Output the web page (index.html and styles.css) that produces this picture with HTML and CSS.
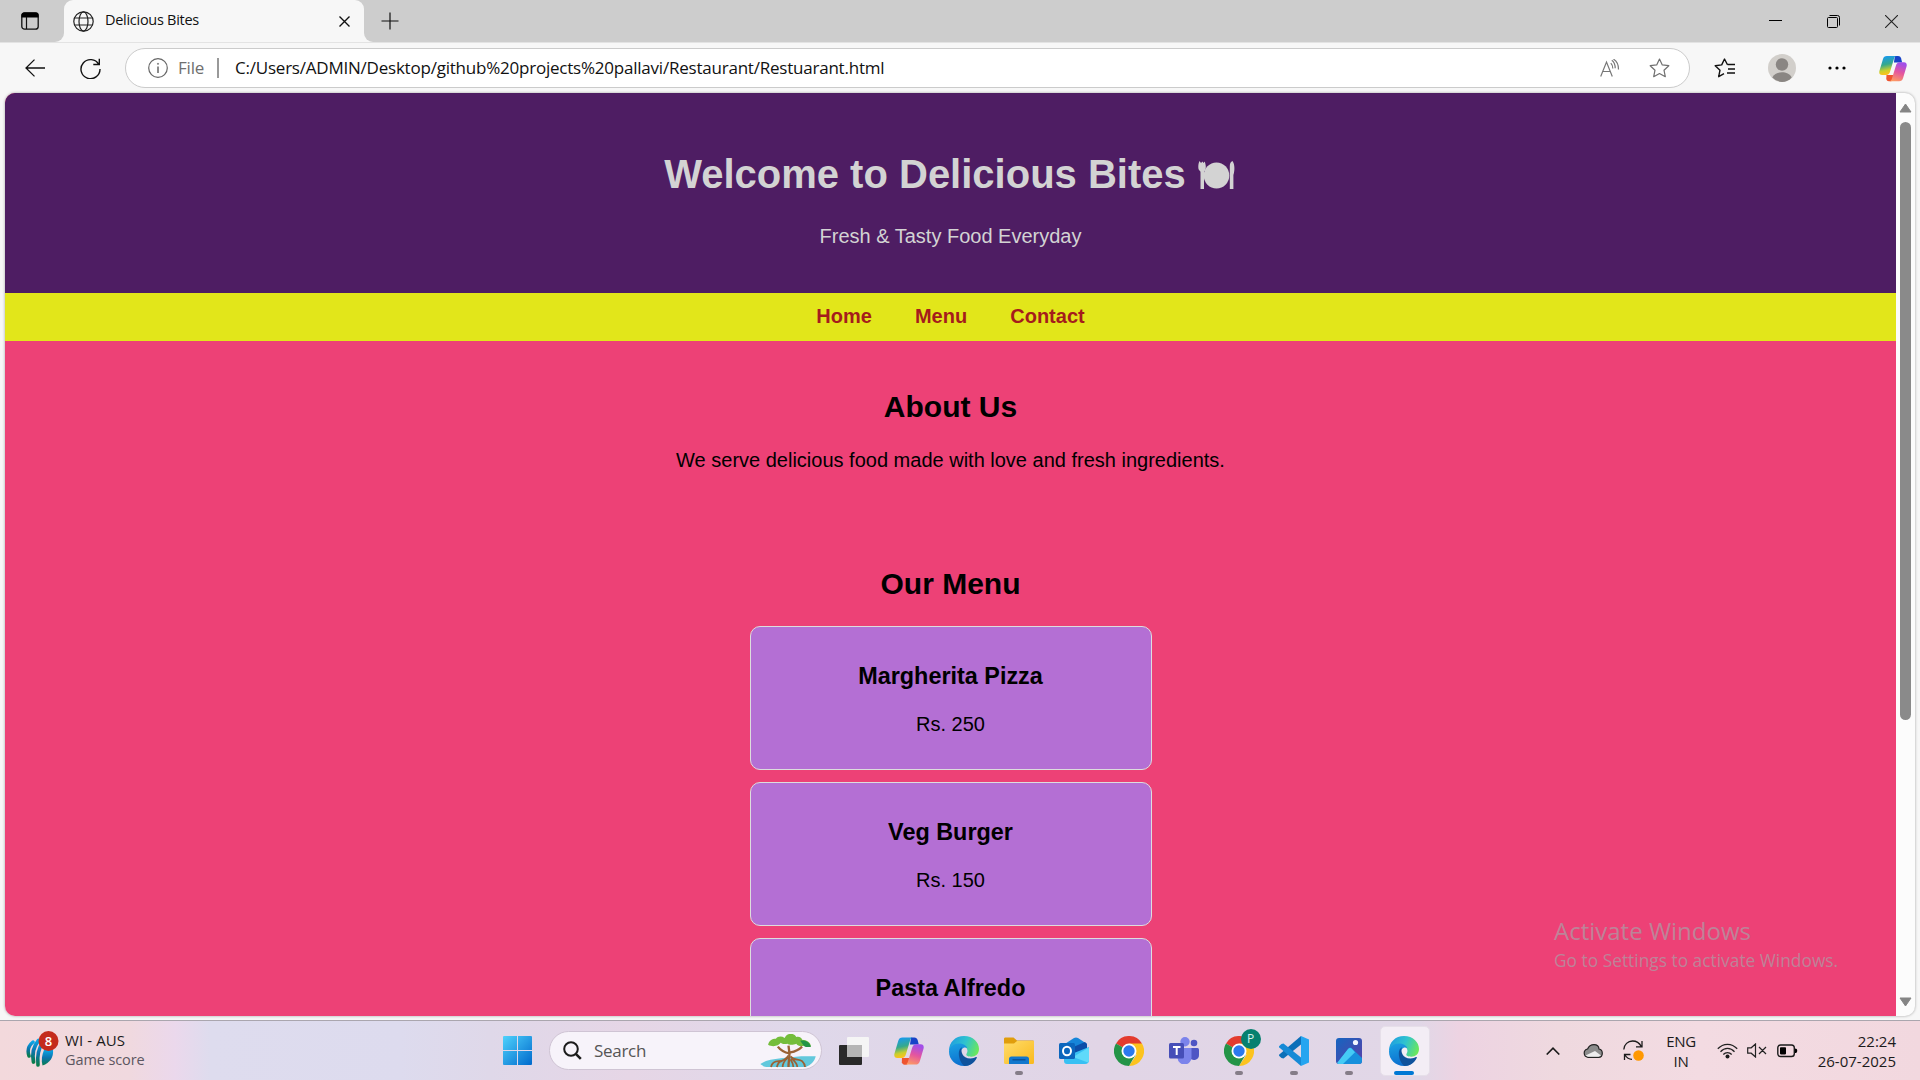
FILE: index.html
```html
<!DOCTYPE html>
<html lang="en">
<head>
<meta charset="utf-8">
<title>Delicious Bites</title>
<link rel="stylesheet" href="styles.css">
</head>
<body>
<svg class="defs" width="0" height="0" aria-hidden="true">
  <defs>
    <linearGradient id="cpA" x1="0" y1="0" x2="0.2" y2="1"><stop offset="0.1" stop-color="#1a9be8"/><stop offset="0.5" stop-color="#35a98c"/><stop offset="0.8" stop-color="#c9cf2d"/><stop offset="1" stop-color="#fcc21b"/></linearGradient>
    <linearGradient id="cpB" x1="0.6" y1="0" x2="0.3" y2="1"><stop offset="0.05" stop-color="#a24fe8"/><stop offset="0.5" stop-color="#e4559f"/><stop offset="1" stop-color="#fd9a63"/></linearGradient>
    <linearGradient id="edA" x1="0" y1="0.3" x2="1" y2="0.6"><stop offset="0" stop-color="#1f9de0"/><stop offset="0.5" stop-color="#2fc3cf"/><stop offset="1" stop-color="#6be85a"/></linearGradient>
    <linearGradient id="edB" x1="0" y1="0" x2="0.3" y2="1"><stop offset="0" stop-color="#1ba3e3"/><stop offset="1" stop-color="#0c6fcf"/></linearGradient>
    <linearGradient id="win" x1="0" y1="0" x2="1" y2="1"><stop offset="0" stop-color="#4fd2fc"/><stop offset="1" stop-color="#0069cc"/></linearGradient>
    <linearGradient id="fold" x1="0" y1="0" x2="1" y2="1"><stop offset="0" stop-color="#ffdc6a"/><stop offset="1" stop-color="#f9b91d"/></linearGradient>
    <linearGradient id="photo" x1="0" y1="0" x2="1" y2="1"><stop offset="0" stop-color="#1565c0"/><stop offset="1" stop-color="#5b3fa8"/></linearGradient>
    <linearGradient id="icc" x1="0.5" y1="0" x2="0.5" y2="1"><stop offset="0" stop-color="#0aa5e6"/><stop offset="0.5" stop-color="#0b74ad"/><stop offset="1" stop-color="#0a7d4b"/></linearGradient>
    <symbol id="copilot" viewBox="0 0 30 28">
      <path d="M17 .6h3.400c1.700 0 2.700.9 3.200 2.500l1.200 4.400H16z" fill="#1743c8"/>
      <path d="M8 21h8l-2 5.500c-.4 1-1.200 1.200-2 1.200h-1.500c-1.400 0-2.200-.8-2.700-2.400z" fill="#ee5430"/>
      <path d="M8.500.6H19c-1.500 0-2.300.9-2.800 2.500L12 17c-.8 2.700-1.900 4-4.400 4H3.300C.7 21-.2 19 .5 16.400L4.200 4C4.900 1.700 6.200.6 8.500.6z" fill="url(#cpA)"/>
      <path d="M21.500 27.600H11c1.500 0 2.300-.9 2.800-2.500L18 11.200c.8-2.700 1.900-4 4.400-4h4.300c2.600 0 3.500 2 2.800 4.600l-3.700 12.400c-.7 2.300-2 3.400-4.300 3.400z" fill="url(#cpB)"/>
    </symbol>
    <symbol id="edge" viewBox="0 0 30 30">
      <path d="M0 15C0 6 6.500 0 15 0c9 0 15 6.200 15 13 0 5-3.600 7.700-7.600 7.700-4.400 0-5.800-1.700-4.700-3.200 2-3 .1-7.700-5.400-7.700C6 9.800 1 13.500 0 15z" fill="url(#edA)"/>
      <path d="M0 15.500C.3 10.500 5 7.500 9.500 7.500c4.500 0 8 2 8.800 4.600-2-1.500-6.300-.6-6.300 4.200C12 23 19 27 25.500 25.300 22.800 28.500 19 30 15 30 6.500 30 0 23.500 0 15.500z" fill="url(#edB)"/>
      <path d="M9.800 17.500c0-3 1.200-5.500 3.200-6.300-1.800 3.500.3 11.300 8.500 11.300 2.400 0 4.300-.8 5.400-1.400.7-.4 1.200.2.800.9C25.500 26.700 21 30 15.500 30c-3.500-2-5.700-8-5.700-12.500z" fill="#0f529c"/>
    </symbol>
    <symbol id="chrome" viewBox="0 0 30 30">
      <path d="M15 15 2 7.500A15 15 0 0 1 28 7.500z" fill="#e33b2e"/>
      <path d="M15 15 28 7.500H15l7.500 11.300L15 30a15 15 0 0 0 13-22.500z" fill="#fcc31e"/>
      <path d="M15 15 2 7.500A15 15 0 0 0 15 30l6.500-11.300z" fill="#249447"/>
      <circle cx="15" cy="15" r="7.500" fill="#fff"/><circle cx="15" cy="15" r="5.700" fill="#2b79ee"/>
    </symbol>
  </defs>
</svg>

<div class="browser">
  <div class="titlebar">
    <div class="tab-actions">
      <svg width="18" height="18" viewBox="0 0 18 18"><rect x=".8" y=".8" width="16.400" height="16.400" rx="2.800" fill="none" stroke="#111" stroke-width="1.300"/><path d="M.5 5.500V3A2.500 2.500 0 0 1 3 .5h12A2.500 2.500 0 0 1 17.500 3v2.500z" fill="#000"/><path d="M5.500 5v12" stroke="#111" stroke-width="1.200"/></svg>
    </div>
    <div class="tab-wrap"><div class="tab">
      <svg width="21" height="21" viewBox="0 0 21 21" fill="none" stroke="#222" stroke-width="1.200"><circle cx="10.500" cy="10.500" r="9.700"/><ellipse cx="10.500" cy="10.500" rx="4.500" ry="9.700"/><path d="M1.600 7h17.800M1.600 14h17.800"/></svg>
      <span class="tab-title">Delicious Bites</span>
      <svg class="tab-close" width="11" height="11" viewBox="0 0 11 11" stroke="#111" stroke-width="1.400"><path d="m.5.5 10 10m0-10-10 10"/></svg>
    </div></div>
    <div class="strip">
      <svg width="18" height="18" viewBox="0 0 18 18" stroke="#111" stroke-width="1.200"><path d="M9 .5v17M.5 9h17"/></svg>
      <div class="window-buttons">
        <svg width="13" height="13" viewBox="0 0 13 13" stroke="#000"><path d="M0 5.500h13"/></svg>
        <svg width="13" height="13" viewBox="0 0 13 13" fill="none" stroke="#000"><rect x=".5" y="2.500" width="10" height="10" rx="1"/><path d="M2.500.5h8a2 2 0 0 1 2 2v8"/></svg>
        <svg width="13" height="13" viewBox="0 0 13 13" stroke="#222" stroke-width="1.100"><path d="m0 0 13 13M13 0 0 13"/></svg>
      </div>
    </div>
  </div>

  <div class="toolbar">
    <svg class="back" width="21" height="18" viewBox="0 0 21 18" fill="none" stroke="#111" stroke-width="1.300"><path d="M20 9H1M9.500.6 1 9l8.500 8.400"/></svg>
    <svg class="reload" width="21" height="21" viewBox="0 0 21 21" fill="none" stroke="#111" stroke-width="1.400"><path d="M18.800 6.500A9.500 9.500 0 1 0 20 11M19.300.8v5.700h-6"/></svg>
    <div class="address">
      <svg width="20" height="20" viewBox="0 0 20 20" fill="none" stroke="#666" stroke-width="1.200"><circle cx="10" cy="10" r="9.300"/><path d="M10 8.500V15" stroke-width="1.500"/><circle cx="10" cy="5.800" r=".6" fill="#666" stroke-width=".7"/></svg>
      <span class="scheme">File</span><i class="divider"></i>
      <span class="url">C:/Users/ADMIN/Desktop/github%20projects%20pallavi/Restaurant/Restuarant.html</span>
      <svg class="read-aloud" width="20" height="18" viewBox="0 0 20 18" fill="none" stroke="#777" stroke-width="1.200"><path d="M.7 17.500 6.500 3l5.800 14.500M2.700 12.500h7.600M10.800 4.200c1.500 1.500 2 3.500 2 5.300M11.800 1.200c2.400 1.800 3.400 4.800 3.400 8M13.500.2c3.500 2 5 5.800 5 10.200"/></svg>
      <svg class="fav" width="21" height="20" viewBox="0 0 21 20" fill="none" stroke="#707070" stroke-width="1.200" stroke-linejoin="round"><path d="m10.500 1 2.800 5.900 6.500.8-4.800 4.500 1.300 6.500-5.800-3.200-5.800 3.200L6 12.200 1.200 7.700l6.500-.8z"/></svg>
    </div>
    <div class="tools">
      <svg width="21" height="20" viewBox="0 0 21 20" fill="none" stroke="#111" stroke-width="1.400" stroke-linejoin="round"><path d="M13.500 6.800 10.500 1 7.700 6.900l-6.500.8L6 12.200l-1.300 6.500 5.300-3M13.500 6.500H21M14 11h7M13 15h8"/></svg>
      <svg width="28" height="28" viewBox="0 0 28 28"><circle cx="14" cy="14" r="14" fill="#d2cfcb"/><circle cx="14" cy="10.500" r="6.200" fill="#8a8683"/><path d="M4.300 23.500C6 19.800 10 18.300 14 18.300s8 1.500 9.700 5.200A14 14 0 0 1 14 28a14 14 0 0 1-9.700-4.500z" fill="#8a8683"/></svg>
      <svg width="18" height="4" viewBox="0 0 18 4"><circle cx="2" cy="2" r="1.600"/><circle cx="9" cy="2" r="1.600"/><circle cx="16" cy="2" r="1.600"/></svg>
      <svg width="28" height="27"><use href="#copilot"/></svg>
    </div>
  </div>

  <div class="viewport">
    <main class="page">
      <header class="hero">
        <h1>Welcome to Delicious Bites <svg class="plate" width="37" height="28" viewBox="0 0 37 28" fill="#d3d3d3"><ellipse cx="18.500" cy="14.500" rx="12.800" ry="13"/><path d="M1.500 0C0 3 0 7.500 1 9c.6 1 1.500 1 1.500 2.500V28h3.500V11.500C6 10 7 10 7.500 8.500 8.300 6 7.500 3 6.800.5L5.500 2l-1-1.500L3 2zM34.500 0c2.500 3.500 2.300 10 .9 14v14h-3.600V5c0-2.500 1-4.500 2.700-5z"/></svg></h1>
        <p>Fresh &amp; Tasty Food Everyday</p>
      </header>
      <nav class="menu-bar"><a>Home</a> <a>Menu</a> <a>Contact</a></nav>
      <section class="about"><h2>About Us</h2><p>We serve delicious food made with love and fresh ingredients.</p></section>
      <section>
        <h2>Our Menu</h2>
        <div class="dish"><h3>Margherita Pizza</h3><p>Rs. 250</p></div>
        <div class="dish"><h3>Veg Burger</h3><p>Rs. 150</p></div>
        <div class="dish"><h3>Pasta Alfredo</h3></div>
      </section>
    </main>
    <div class="scrollbar">
      <svg width="13" height="10" viewBox="0 0 13 10"><path d="M6.500 1 12 9H1z" fill="#858585" stroke="#858585" stroke-linejoin="round"/></svg>
      <i class="thumb"></i>
      <svg width="13" height="10" viewBox="0 0 13 10"><path d="M6.500 9 12 1H1z" fill="#858585" stroke="#858585" stroke-linejoin="round"/></svg>
    </div>
  </div>
</div>

<footer class="taskbar">
  <div class="widget">
    <svg width="33" height="36" viewBox="0 0 33 36"><g fill="none" stroke="url(#icc)" stroke-linecap="round"><path d="M7 11C2 15 1 19 3 25" stroke-width="3.500"/><path d="M12.500 9.500C7 16 6 23 7.500 31" stroke-width="3.800"/><path d="M17 11c-5 7-6 14-5 23" stroke-width="3.600"/></g><path d="M18 19h9c.8 7-3 13-10.500 15.500C15 29 16 24 18 19z" fill="url(#icc)"/><circle cx="22.500" cy="10" r="10" fill="#c42b1c"/><text x="22.500" y="14.800" text-anchor="middle" class="badge-text">8</text></svg>
    <div class="score"><b>WI - AUS</b><span>Game score</span></div>
  </div>
  <div class="apps">
    <div class="app"><svg width="29" height="29" viewBox="0 0 29 29" fill="url(#win)"><path d="M1 0h13v14H0V1a1 1 0 0 1 1-1zM15 0h13a1 1 0 0 1 1 1v13H15zM0 15h14v14H1a1 1 0 0 1-1-1zM15 15h14v13a1 1 0 0 1-1 1H15z"/></svg></div>
    <div class="search">
      <svg width="19" height="19" viewBox="0 0 19 19" fill="none" stroke="#1b1b1b" stroke-width="2"><circle cx="8" cy="8" r="6.800"/><path d="m12.800 12.800 5 5" stroke-width="2.600"/></svg>
      <span>Search</span>
      <svg class="tree" width="57" height="34" viewBox="0 0 58 35"><path d="M0 31c5-4 13-5 21-6l21-2h15c-1 5-5 9-10 11H8c-3 0-6-1-8-3z" fill="#62c8dc"/><g fill="none" stroke="#9a6235" stroke-width="1.800"><path d="M29 34c0-6 1-9 1-14M30 20l-1-8M30 20c-5-1-9-3-12-7M31 19c5-1 9-3 12-6" stroke-width="2.400"/><path d="M11 34c1-5 4-6 8-6 5 0 8-3 10-6M17 34c1-4 3-6 6-6M23 34c0-6 4-8 6-10M31 23c4 5 9 2 12 5 2 2 3 4 3 6M32 25c4 4 6 5 6 9M31 26c2 3 3 5 3 8"/></g><path d="M8 11c1-4 4-6 8-6 2-3 6-3 9-1 3-6 10-5 12-1 3-1 6 1 6 3 5 0 9 3 9 7-3 1-6 0-7-1-3 1-7 0-8-2-4 2-8 1-9 0-3 1-6 0-7-1-2 3-8 5-13 2z" fill="#74bd3c"/><path d="M41 7c6-1 10 2 11 6-4 1-7 0-8-2z" fill="#239447"/></svg>
    </div>
    <div class="app first"><svg width="30" height="28" viewBox="0 0 30 28"><rect y="8" width="23" height="20" rx="1" fill="#292929"/><rect x="8" width="22" height="20" rx="1" fill="#f5f5f5"/><path d="M8 8h15v12H8z" fill="#b5b5b5"/></svg></div>
    <div class="app"><svg width="30" height="28"><use href="#copilot"/></svg></div>
    <div class="app"><svg width="30" height="30"><use href="#edge"/></svg></div>
    <div class="app open"><svg width="30" height="27" viewBox="0 0 30 27"><path d="M0 9V2C0 1 .5.500 1.500.500h8L13 3.500h16a1 1 0 0 1 1 1V9z" fill="#e09d0c"/><path d="M0 6.500h10l3-2.500h17v21.500a1.500 1.500 0 0 1-1.500 1.500h-27A1.500 1.500 0 0 1 0 25.500z" fill="url(#fold)"/><path d="M5 27v-5a2.500 2.500 0 0 1 2.500-2.500h15A2.500 2.500 0 0 1 25 22v5z" fill="#1177cd"/><path d="M8.500 22.800h13" stroke="#0b4d91" stroke-width="1.300"/></svg></div>
    <div class="app"><svg width="30" height="27" viewBox="0 0 30 27"><path d="M5 7.500 15 1c1.300-.8 2.700-.8 4 0l9 6v8H5z" fill="#1685d9"/><path d="m12 11 14-6 2 2v4l-11 7z" fill="#0c4da8"/><path d="M5 16h10l15-6v13a4 4 0 0 1-4 4H8a3 3 0 0 1-3-3z" fill="#38c0f3"/><path d="m14 20 16-9.500V23a4 4 0 0 1-1 2.500z" fill="#5fdafa"/><rect y="6" width="16" height="16" rx="1.500" fill="#0b66bd"/><ellipse cx="8" cy="14" rx="4" ry="4.300" fill="none" stroke="#fff" stroke-width="2"/></svg></div>
    <div class="app"><svg width="30" height="30"><use href="#chrome"/></svg></div>
    <div class="app"><svg width="30" height="27" viewBox="0 0 30 27"><circle cx="25" cy="6" r="3.300" fill="#4f55c4"/><path d="M20 11h8.500A1.500 1.500 0 0 1 30 12.500V18a5 5 0 0 1-9 3z" fill="#4f55c4"/><circle cx="16" cy="4.700" r="4.700" fill="#7b83eb"/><path d="M8 11h14.500v9a7 7 0 0 1-14 1z" fill="#7b83eb"/><rect y="6" width="15" height="15.500" rx="1.500" fill="#464eb8"/><path d="M4 10h7.500M7.700 10v8" stroke="#fff" stroke-width="2"/></svg></div>
    <div class="app open"><svg width="30" height="30"><use href="#chrome"/></svg><span class="profile">P</span></div>
    <div class="app open"><svg width="30" height="30" viewBox="0 0 30 30"><path d="m22 0 8 3.500v23L22 30z" fill="#25a5f0"/><path d="M22 0v8.500L4.500 22.500 2.500 22 .3 20c-.4-.4-.4-1 0-1.400z" fill="#0b6fb8"/><path d="M22 30v-8.500L4.500 7.500 2.500 8 .3 10c-.4.4-.4 1 0 1.400z" fill="#168ad6"/></svg></div>
    <div class="app open"><svg width="26" height="26" viewBox="0 0 26 26"><rect width="26" height="26" rx="3" fill="url(#photo)"/><circle cx="19.500" cy="4.500" r="2.600" fill="#f2f6ff"/><path d="m2 25 10.500-14.500c1-1.300 2.500-1.300 3.500 0L26 20v3a3 3 0 0 1-3 3H3z" fill="#1790dc"/><path d="M1 25 12 11c1.300-1.600 3-1.400 4.500.4l2.500 2.800L7 26H3a3 3 0 0 1-2-1z" fill="#45cbf5"/></svg></div>
    <div class="app open active"><svg width="30" height="30"><use href="#edge"/></svg></div>
  </div>
  <div class="tray">
    <svg class="chev" width="14" height="8" viewBox="0 0 14 8" fill="none" stroke="#1b1b1b" stroke-width="1.600"><path d="m.7 7.500 6.300-6.300 6.300 6.300"/></svg>
    <svg class="cloud" width="20" height="14" viewBox="0 0 20 14"><path d="M5 13.300a4.200 4.200 0 0 1-.4-8.300C6 1.500 9 .7 11 .7c2.800 0 4.800 1.800 5 4.300 2 .4 3.300 2 3.300 4.200 0 2.300-1.600 4.100-3.800 4.100z" fill="#8c8c8c" stroke="#222" stroke-width="1.200"/><path d="M2.500 11.500 12 7l6 4.500-2.500 1.300H5z" fill="#ededed"/></svg>
    <svg class="sync" width="21" height="21" viewBox="0 0 21 21" fill="none" stroke="#1b1b1b" stroke-width="1.300"><path d="M.8 9.500C1 4.500 5 1 9.500 1c4 0 7 2 8.800 5.500M19 1v5.800h-6M1.500 20v-5.500h6M2 15c1.500 2.500 4 4.300 7 4.300"/><circle cx="15.500" cy="15.500" r="5.300" fill="#ff9800" stroke="none"/></svg>
    <div class="lang">ENG<br>IN</div>
    <svg class="wifi" width="21" height="16" viewBox="0 0 21 16" fill="none" stroke="#222" stroke-width="1.300"><path d="M.8 5.800c5.400-6 14-6 19.400 0M3.500 8.700c4-4.400 10-4.400 14 0M6.300 11.500c2.400-2.600 6-2.600 8.400 0"/><circle cx="10.500" cy="13.400" r="2" fill="#1b1b1b" stroke="none"/></svg>
    <svg class="mute" width="20" height="15" viewBox="0 0 20 15" fill="none" stroke="#222" stroke-width="1.200"><path d="M.7 4.800h3.500L8.500 1v13L4.200 10.200H.7zM12 4l7 7m0-7-7 7"/></svg>
    <svg class="battery" width="21" height="14" viewBox="0 0 21 14"><rect x=".8" y="1" width="16.500" height="11.500" rx="2.800" fill="none" stroke="#1b1b1b" stroke-width="1.400"/><rect x="3" y="3.200" width="6" height="7.200" rx=".8"/><path d="M18 4.500c1.500 0 2.200.8 2.200 2.200s-.7 2.300-2.200 2.300z"/></svg>
    <div class="clock">22:24<br>26-07-2025</div>
  </div>
</footer>

<aside class="watermark"><strong>Activate Windows</strong><span>Go to Settings to activate Windows.</span></aside>
</body>
</html>
```
FILE: styles.css
```css
* { box-sizing: border-box; }
html, body { height: 100%; }
body {
  margin: 0;
  overflow: hidden;
  display: flex;
  flex-direction: column;
  background: #f7f7f7;
  font-family: "Open Sans", "Noto Sans", sans-serif;
}
svg { display: block; flex: none; }
.defs { position: absolute; }

.browser { height: 1020px; flex: none; display: flex; flex-direction: column; }

/* Tab strip */
.titlebar { height: 42px; display: flex; background: #f7f7f7; }
.tab-actions { width: 64px; background: #cdcdcd; border-bottom-right-radius: 9px; padding: 12px 0 0 21px; }
.tab-wrap { width: 300px; background: #cdcdcd; height: 30px; }
.tab { height: 42px; background: #f7f7f7; border-radius: 9px 9px 0 0; display: flex; align-items: center; padding: 0 14px 0 9px; }
.tab-title { margin-left: 11px; font-size: 14.500px; line-height: 20px; letter-spacing: -0.28px; color: #111; padding-bottom: 2px; }
.tab-close { margin-left: auto; }
.strip { flex: 1; background: #cdcdcd; border-bottom-left-radius: 9px; display: flex; justify-content: space-between; align-items: center; padding: 0 22px 0 17px; }
.window-buttons { display: flex; gap: 45px; }

/* Address bar */
.toolbar { height: 51px; flex: none; display: flex; align-items: center; border-top: 1px solid #e3e3e3; padding: 0 13px 0 25px; }
.reload { margin-left: 34px; }
.address { margin-left: 24px; width: 1565px; height: 40px; border: 1px solid #cbcbcb; border-radius: 20px; background: #fff; display: flex; align-items: center; padding: 0 19px 0 22px; font-size: 17px; }
.scheme { margin-left: 10px; color: #6f6f6f; letter-spacing: -0.2px; width: 29px; padding-bottom: 2px; }
.divider { width: 2px; height: 20px; background: #999; margin: 0 16px 0 10px; }
.url { color: #111; white-space: nowrap; letter-spacing: -0.22px; padding-bottom: 2px; }
.read-aloud { margin-left: auto; }
.fav { margin-left: 29px; }
.tools { flex: 1; margin-left: 24px; display: flex; align-items: center; justify-content: space-between; }

/* Page area */
.viewport { height: 923px; flex: none; margin: 0 5px; border-radius: 10px; overflow: hidden; display: flex; background: #fcfcfc; box-shadow: 0 0 3px rgba(0, 0, 0, .35); }
.page { flex: 1; overflow: hidden; background: #ed4176; color: #000; text-align: center; font: 20px/23px "Liberation Sans", Arial, sans-serif; }
.hero { background: #4e1d63; color: #d3d3d3; padding: 25px; height: 200px; }
h1 { font-size: 40px; line-height: 47px; margin: 26.8px 0; padding-top: 6px; }
.plate { display: inline-block; vertical-align: -1px; margin-left: 1px; margin-right: 2px; }
p { margin: 20px 0; }
.menu-bar { background: #e2e61a; padding: 11.500px 12.500px; height: 48px; font-weight: bold; color: #a51c1c; }
.menu-bar a { margin: 0 18.750px; }
section { padding: 25px; }
.about { padding-top: 24.200px; }
h2 { font-size: 30px; line-height: 34px; margin: 24.900px 0; }
h3 { font-size: 23.400px; line-height: 27px; margin: 23.400px 0 22.900px; }
.dish { width: 402px; margin: 12.500px auto; padding: 12.500px 12.500px 13px; border: 1px solid #ddd; border-radius: 10px; background: #b46fd4; }

.scrollbar { width: 19px; display: flex; flex-direction: column; align-items: center; padding: 10px 0 9px; }
.thumb { width: 11px; height: 598px; margin: 9px 0 auto; border-radius: 6px; background: #8a8a8a; }

/* Taskbar */
.taskbar {
  flex: 1;
  display: flex;
  align-items: center;
  border-top: 1px solid #aaa6ae;
  padding-bottom: 1px;
  background: linear-gradient(90deg, #f3d9dc 0, #f0d9df 130px, #ebd8ec 175px, #dedcee 210px, #dddbee 400px, #dfd8e9 490px, #e6d6e6 630px, #dfd8ea 800px, #e1d5e6 1100px, #e1d7e7 1420px, #edd3e2 1460px, #efd9df 1560px, #f3dbe2 1700px, #f2d8df 1920px);
  color: #1b1b1b;
}
.widget { width: 490px; display: flex; align-items: center; padding: 0 0 4px 26px; }
.badge-text { font-size: 13px; font-weight: 600; fill: #fff; }
.score { margin-left: 6px; padding-top: 3px; display: flex; flex-direction: column; font-size: 14.500px; line-height: 20px; }
.score b { font-weight: 400; font-size: 15px; letter-spacing: 0.1px; }
.score span { color: #5c5660; letter-spacing: -0.1px; }
.apps { display: flex; align-items: center; }
.app { width: 55px; height: 59px; position: relative; display: flex; align-items: center; justify-content: center; }
.first { margin-left: 4.500px; }
.search { width: 273px; height: 39px; margin-left: 4px; border-radius: 20px; background: #f7f3fa; border: 1px solid #cfc4d4; display: flex; align-items: center; padding: 0 4px 0 13px; font-size: 17px; color: #555; }
.search span { margin-left: 12px; letter-spacing: -0.3px; }
.tree { margin-left: auto; }
.open::after { content: ""; position: absolute; bottom: 5px; width: 8px; height: 4px; border-radius: 2px; background: #857d88; }
.active::before { content: ""; position: absolute; left: 3px; top: 5px; width: 48px; height: 48px; border-radius: 5px; background: #f3edf5; border: 1px solid #e6dfe9; }
.active svg { position: relative; }
.active::after { width: 20px; background: #0078d4; }
.profile { position: absolute; left: 29px; top: 8px; width: 20px; height: 20px; border-radius: 50%; background: #07806f; color: #d8f0ec; font-size: 12px; line-height: 20px; text-align: center; }
.tray { margin-left: auto; display: flex; align-items: center; padding-right: 24px; font-size: 15px; line-height: 20px; letter-spacing: -0.3px; }
.cloud { margin-left: 23px; }
.sync { margin-left: 20px; }
.lang { width: 30px; margin-left: 22px; text-align: center; }
.wifi { margin-left: 21px; }
.mute { margin-left: 9px; }
.battery { margin-left: 10px; }
.clock { width: 79px; margin-left: 19px; text-align: right; white-space: nowrap; letter-spacing: 0; }

/* System overlay drawn over the page */
.watermark { position: absolute; left: 1554px; top: 913px; display: flex; flex-direction: column; color: #bd8398; white-space: nowrap; }
.watermark strong { font-weight: 400; font-size: 24px; line-height: 36px; }
.watermark span { font-size: 17.350px; line-height: 23px; }
```
